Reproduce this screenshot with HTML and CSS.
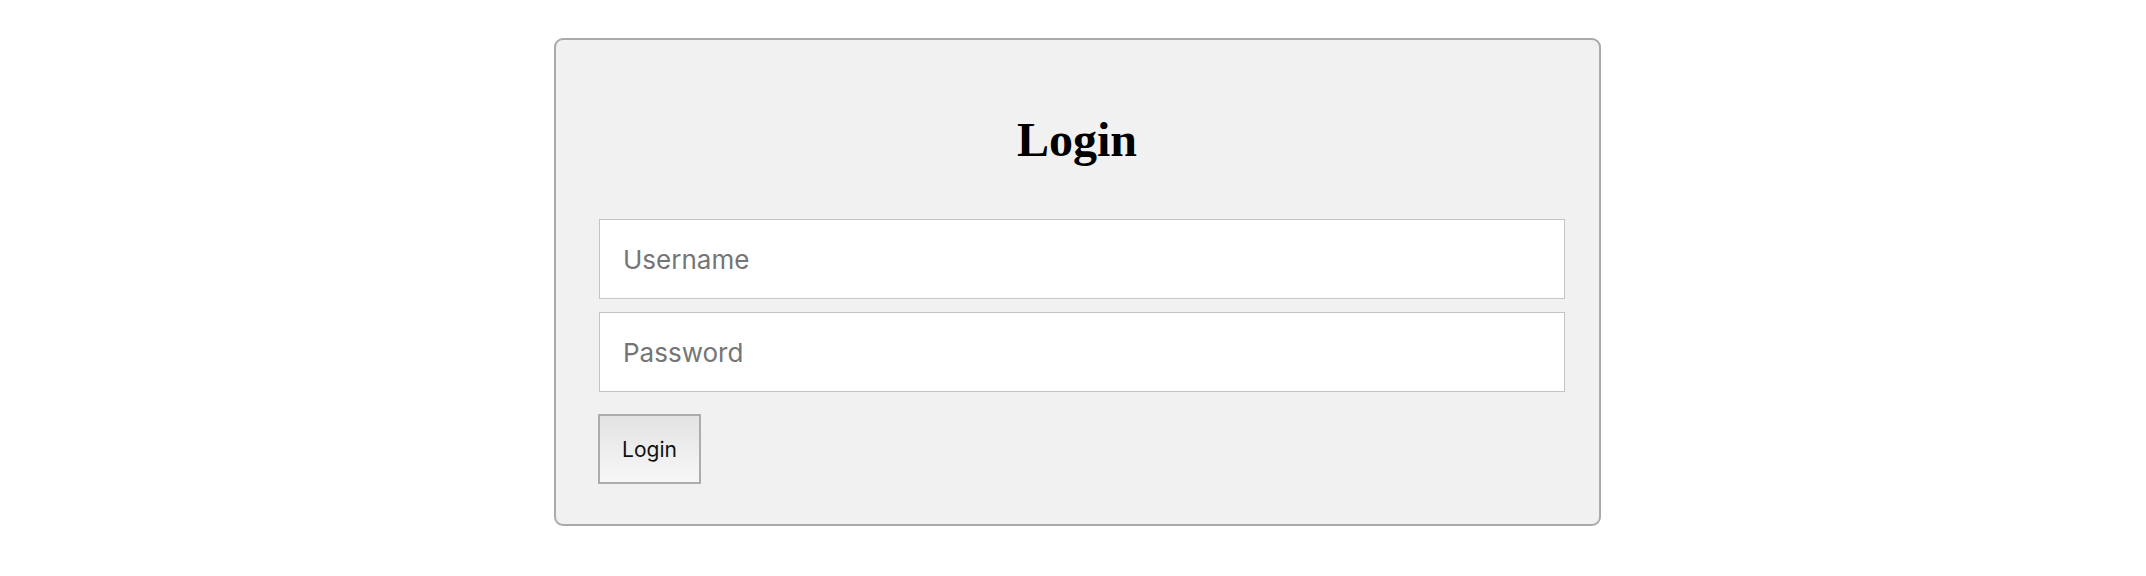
FILE: index.html
```html
<!DOCTYPE html>
<html>
<head>
<meta charset="utf-8">
<link rel="stylesheet" href="styles.css">
</head>
<body>
<div class="page">
  <form class="card">
    <h1 class="title">Login</h1>
    <input class="field" type="text" placeholder="Username">
    <input class="field" type="password" placeholder="Password">
    <button class="btn" type="button">Login</button>
  </form>
</div>
</body>
</html>
```
FILE: styles.css
```css
html, body {
  margin: 0;
  padding: 0;
  background: #ffffff;
}
.page {
  display: flex;
  justify-content: flex-start;
  padding: 38px 0 0 554px;
}
.card {
  box-sizing: border-box;
  width: 1047px;
  height: 488px;
  background: #f1f1f1;
  border: 2px solid #aaaaaa;
  border-radius: 9px;
  padding: 73px 34px 0 43px;
  display: flex;
  flex-direction: column;
  align-items: stretch;
}
.title {
  margin: 0 0 53px;
  font-family: "Liberation Serif", serif;
  font-weight: bold;
  font-size: 48px;
  line-height: 53px;
  text-align: center;
  color: #000;
  padding-right: 10px;
}
.field {
  box-sizing: border-box;
  height: 80px;
  width: 966px;
  margin: 0 0 13px;
  padding: 0 23px;
  border: 1px solid #c4c4c4;
  background: #fff;
  font-family: "Inter", sans-serif;
  font-size: 26px;
  color: #333;
  outline: none;
}
.field + .field {
  margin-bottom: 22px;
}
.field::placeholder {
  color: #757575;
}
.btn {
  box-sizing: border-box;
  width: 103px;
  height: 70px;
  align-self: flex-start;
  border: 2px solid #acacac;
  background: linear-gradient(#e3e3e3, #f7f7f7);
  font-family: "Inter", sans-serif;
  font-size: 21px;
  color: #111;
  padding: 0;
  margin-left: -1px;
}
```
